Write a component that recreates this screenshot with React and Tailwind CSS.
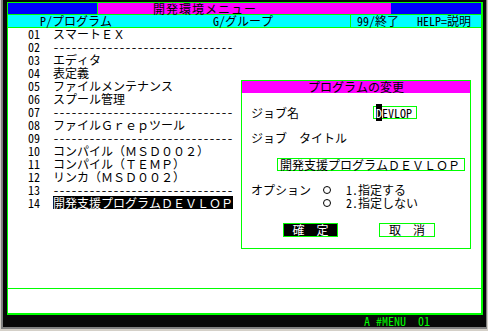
import React from 'react';

// Terminal-style menu screen (MS Gothic look): 12px full-width, 6px half-width cells
const FONT = "font-['Noto_Sans_Mono_CJK_JP','Noto_Sans_CJK_JP',monospace]";
const DASH = '-'.repeat(30);

const menu = [
  ['01', 'スマートＥＸ'],
  ['02', DASH],
  ['03', 'エディタ'],
  ['04', '表定義'],
  ['05', 'ファイルメンテナンス'],
  ['06', 'スプール管理'],
  ['07', DASH],
  ['08', 'ファイルＧｒｅｐツール'],
  ['09', DASH],
  ['10', 'コンパイル（ＭＳＤ００２）'],
  ['11', 'コンパイル（ＴＥＭＰ）'],
  ['12', 'リンカ（ＭＳＤ００２）'],
  ['13', DASH],
  ['14', '開発支援プログラムＤＥＶＬＯＰ', true],
];

// radio mark drawn as a small ring, like the terminal's "○"
function Ring() {
  return (
    <span className="w-[23px] flex items-center">
      <span className="block w-[8px] h-[8px] rounded-full border-[1.5px] border-black" />
    </span>
  );
}

function ChangeDialog() {
  return (
    <div className="absolute left-[233px] top-[52px] w-[230px] h-[169px] flex flex-col border border-[#00ff00] bg-white">
      <div className="h-[12px] bg-[#ff00ff] text-center leading-[12px]">プログラムの変更</div>

      <div className="mt-[13px] h-[13px] flex items-center">
        <span className="w-[131px] pl-[9px]">ジョブ名</span>
        <div className="w-[44px] h-[13px] border border-[#00ff00] pl-[2px] leading-[11px] whitespace-pre">
          <span className="bg-black text-white">D</span>EVLOP
        </div>
      </div>

      <div className="mt-[12px] h-[13px] pl-[9px]">ジョブ　タイトル</div>

      <div className="mt-[14px] ml-[35px] w-[188px] h-[13px] border border-[#00ff00] pl-[2px] leading-[11px]">
        開発支援プログラムＤＥＶＬＯＰ
      </div>

      <div className="mt-[12px] h-[13px] flex">
        <span className="w-[81px] pl-[9px]">オプション</span>
        <Ring />
        <span>1.指定する</span>
      </div>
      <div className="h-[13px] flex">
        <span className="w-[81px]" />
        <Ring />
        <span>2.指定しない</span>
      </div>

      <div className="mt-[14px] h-[14px] flex">
        <button
          type="button"
          className="ml-[41px] w-[55px] h-[14px] border border-[#00ff00] bg-black text-white text-center leading-[12px]"
        >
          確　定
        </button>
        <button
          type="button"
          className="ml-[41px] w-[56px] h-[14px] border border-[#00ff00] bg-white text-black text-center leading-[12px]"
        >
          取　消
        </button>
      </div>
    </div>
  );
}

export default function App() {
  return (
    <div className={`w-[488px] h-[331px] bg-[#d4d0c8] px-[1px] pb-[2px] text-[12px] leading-[13px] text-black ${FONT}`}>
      <div className="h-full flex flex-col bg-[#080808] border-l-2 border-r border-b-2 border-[#808080] pl-[4px] pr-[3px] pt-[2px]">
        <div className="flex flex-col border-t border-l border-r-2 border-b-2 border-[#00ff00] bg-white">
          {/* title bar */}
          <div className="h-[12px] flex border-b border-[#00ff00] leading-[11px]">
            <div className="w-[90px] bg-[#0000ff] border-r border-[#00ff00]" />
            <div className="w-[293px] bg-[#ff00ff] pl-[55px] tracking-[1px]">開発環境メニュー</div>
            <div className="flex-1 bg-[#0000ff]" />
          </div>

          {/* function keys */}
          <div className="h-[13px] flex bg-[#00ffff] border-b border-[#00ff00] leading-[12px]">
            <div className="w-[343px] flex pl-[32px] border-r border-[#00ff00]">
              <span className="w-[173px]">P/プログラム</span>
              <span>G/グループ</span>
            </div>
            <div className="flex-1 flex pl-[6px]">
              <span className="w-[60px]">99/終了</span>
              <span>HELP=説明</span>
            </div>
          </div>

          {/* menu body */}
          <div className="relative h-[261px] border-b border-[#00ff00]">
            <div className="-mt-px flex flex-col">
              {menu.map(([no, label, active]) => (
                <div key={no} className="h-[13px] flex whitespace-pre">
                  <span className="w-[45px] pl-[20px]">{no}</span>
                  <span className={active ? 'bg-black text-white' : ''}>{label}</span>
                </div>
              ))}
            </div>
            <ChangeDialog />
          </div>

          <div className="h-[24px]" />
        </div>

        {/* status line */}
        <div className="h-[12px] pl-[357px] leading-[12px] text-[#00ff00] whitespace-pre">A #MENU  01</div>
      </div>
    </div>
  );
}
